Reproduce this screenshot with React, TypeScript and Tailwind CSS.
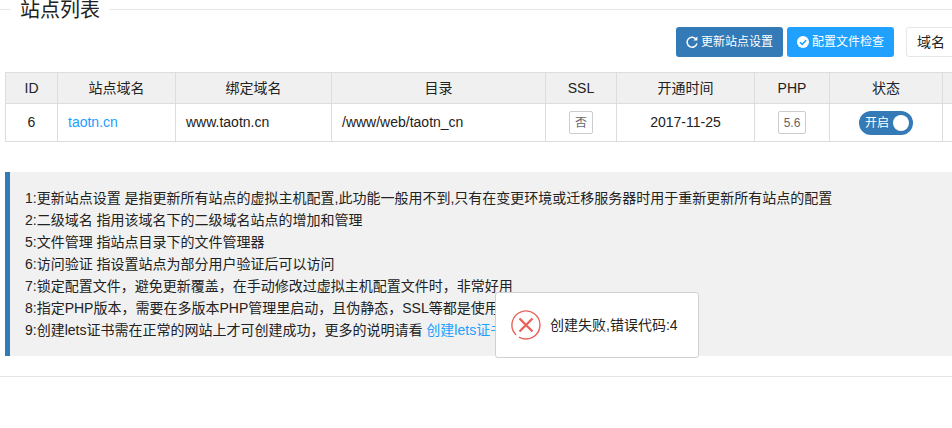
const font = { fontFamily: '"Liberation Sans", "Noto Sans CJK SC", sans-serif' };

const notes = [
  "1:更新站点设置 是指更新所有站点的虚拟主机配置,此功能一般用不到,只有在变更环境或迁移服务器时用于重新更新所有站点的配置",
  "2:二级域名 指用该域名下的二级域名站点的增加和管理",
  "5:文件管理 指站点目录下的文件管理器",
  "6:访问验证 指设置站点为部分用户验证后可以访问",
  "7:锁定配置文件，避免更新覆盖，在手动修改过虚拟主机配置文件时，非常好用",
  "8:指定PHP版本，需要在多版本PHP管理里启动，且伪静态，SSL等都是使用的对应版本",
];

const columns: [string, string][] = [
  ["ID", "w-[52px]"],
  ["站点域名", "w-[118px]"],
  ["绑定域名", "w-[156px]"],
  ["目录", "w-[214px]"],
  ["SSL", "w-[71px]"],
  ["开通时间", "w-[138px]"],
  ["PHP", "w-[75px]"],
  ["状态", "w-[113px]"],
  ["", "w-[120px]"],
];

function Tag({ children }: { children: string }) {
  return (
    <span className="inline-flex h-[23px] items-center justify-center rounded-[2px] border border-[#ccc] px-[5px] align-middle text-[12px] text-[#666]">
      {children}
    </span>
  );
}

export default function App() {
  const td = "border border-[#ddd] p-0 text-[14px]";
  return (
    <div style={font} className="relative h-[428px] w-[952px] overflow-hidden bg-white text-[#222]">
      <div className="flex h-[19px] items-center">
        <div className="h-px w-[10px] bg-[#e5e5e5]" />
        <h1 className="px-[10px] pt-[2px] text-[20px] leading-[19px] font-normal">站点列表</h1>
        <div className="h-px flex-1 bg-[#e5e5e5]" />
      </div>

      <div className="mt-[8px] flex h-[30px] pl-[676px] text-[12px]">
        <button className="flex h-[30px] w-[107px] shrink-0 items-center justify-center gap-[3px] rounded-[3px] bg-[#337ab7] text-white">
          <svg width="12" height="12" viewBox="0 0 12 12" fill="none" className="shrink-0">
            <path d="M10.2 3.2A5 5 0 1 0 11 7.4" stroke="white" strokeWidth="1.5" />
            <path d="M11.4 0.6V4.6H7.4Z" fill="white" />
          </svg>
          更新站点设置
        </button>
        <button className="ml-[4px] flex h-[30px] w-[107px] shrink-0 items-center justify-center gap-[3px] rounded-[3px] bg-[#20a0ff] text-white">
          <svg width="12" height="12" viewBox="0 0 12 12" fill="none" className="shrink-0">
            <circle cx="6" cy="6" r="6" fill="white" />
            <path d="M3 6.2 5.2 8.4 9.2 4.2" stroke="#20a0ff" strokeWidth="1.6" />
          </svg>
          配置文件检查
        </button>
        <div className="ml-[12px] flex h-[30px] w-[80px] shrink-0 items-center rounded-[3px] border border-[#e6e6e6] pl-[10px] text-[14px]">
          域名
        </div>
      </div>

      <table className="mt-[15px] ml-[5px] w-[1057px] table-fixed border-collapse">
        <thead>
          <tr className="h-[31px] bg-[#f0f0f0]">
            {columns.map(([name, width]) => (
              <th key={width + name} className={`${td} ${width} text-center font-normal`}>
                {name}
              </th>
            ))}
          </tr>
        </thead>
        <tbody>
          <tr className="h-[38px]">
            <td className={`${td} text-center`}>6</td>
            <td className={`${td} pl-[10px] text-[#20a0ff]`}>taotn.cn</td>
            <td className={`${td} pl-[10px]`}>www.taotn.cn</td>
            <td className={`${td} pl-[10px]`}>/www/web/taotn_cn</td>
            <td className={`${td} text-center`}>
              <Tag>否</Tag>
            </td>
            <td className={`${td} text-center`}>2017-11-25</td>
            <td className={`${td} text-center`}>
              <Tag>5.6</Tag>
            </td>
            <td className={`${td} text-center`}>
              <span className="inline-flex h-[24px] w-[54px] items-center justify-between rounded-full bg-[#337ab7] pr-[4px] pl-[6px] align-middle text-[12px] text-white">
                开启
                <span className="h-[16px] w-[16px] rounded-full bg-white" />
              </span>
            </td>
            <td className={td} />
          </tr>
        </tbody>
      </table>

      <div className="mt-[30px] ml-[5px] h-[184px] border-l-[5px] border-[#337ab7] bg-[#f1f1f1] pt-[15px] pl-[15px] text-[14px] leading-[22px]">
        {notes.map((line) => (
          <p key={line} className="whitespace-nowrap">
            {line}
          </p>
        ))}
        <p className="whitespace-nowrap">
          9:创建lets证书需在正常的网站上才可创建成功，更多的说明请看 <span className="text-[#20a0ff]">创建lets证书教程</span>
        </p>
      </div>

      <div className="mt-[20px] h-px bg-[#e5e5e5]" />

      <div className="absolute top-[292px] left-[495px] flex h-[66px] w-[204px] items-center rounded-[3px] border border-[#d0d0d0] bg-white pl-[15px] text-[14px]">
        <svg width="30" height="30" viewBox="0 0 30 30" fill="none" stroke="#e9635a" className="shrink-0">
          <path d="M8 27.1A14 14 0 1 0 5.1 24.9" strokeWidth="1.4" />
          <path d="M8.5 8.5 21.5 21.5M21.5 8.5 8.5 21.5" strokeWidth="2.4" />
        </svg>
        <span className="ml-[9px] whitespace-nowrap">创建失败,错误代码:4</span>
      </div>
    </div>
  );
}
